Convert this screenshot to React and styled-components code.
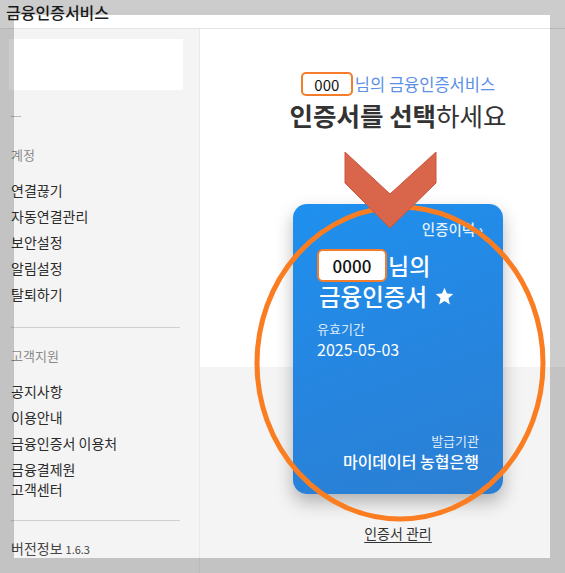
import React from "react";
import styled, { createGlobalStyle } from "styled-components";
import { MdStar } from "react-icons/md";

const GlobalStyle = createGlobalStyle`
  html, body {
    margin: 0;
    padding: 0;
    overflow: hidden;
    background: #ffffff;
  }
  body {
    font-family: "Noto Sans CJK KR", "Noto Sans", sans-serif;
    color: #333;
  }
  * {
    box-sizing: border-box;
  }
`;

const Page = styled.div`
  width: 600px;
  height: 573px;
  display: flex;
  flex-direction: column;
`;

const TitleBar = styled.div`
  height: 29px;
  flex: none;
  padding: 0 0 0 6px;
  border-bottom: 1px solid #e4e4e4;
  font-size: 16px;
  font-weight: 500;
  line-height: 24px;
  color: #1e1e1e;
`;

const Body = styled.div`
  flex: 1;
  display: flex;
  min-height: 0;
`;

const Sidebar = styled.aside`
  width: 200px;
  flex: none;
  background: #f4f4f4;
  border-right: 1px solid #e9e9e9;
  padding: 10px 0 0 9px;
`;

const ProfileBox = styled.div`
  width: 174px;
  height: 51px;
  background: #ffffff;
`;

const NameDash = styled.div`
  width: 10px;
  height: 1px;
  margin: 26px 0 0 2px;
  background: #b9b9b9;
`;

const SectionLabel = styled.div`
  margin: ${(p) => p.$top}px 0 0 2px;
  font-size: 13px;
  line-height: 20px;
  color: #8a8a8a;
`;

const Menu = styled.ul`
  list-style: none;
  margin: 15px 0 0 2px;
  padding: 0;
  display: flex;
  flex-direction: column;
  gap: 6px;
`;

const MenuItem = styled.li`
  font-size: 14px;
  line-height: 20px;
  color: #2b2b2b;
`;

const Divider = styled.hr`
  width: 169px;
  margin: ${(p) => p.$top}px 0 0 2px;
  border: 0;
  border-top: 1px solid #cfcfcf;
`;

const Version = styled.div`
  margin: 17px 0 0 2px;
  font-size: 14px;
  line-height: 20px;
  color: #444;

  small {
    font-size: 11px;
    margin-left: 3px;
  }
`;

const Main = styled.main`
  position: relative;
  width: 400px;
  flex: none;
  padding-right: 4px;
  display: flex;
  flex-direction: column;
  align-items: center;
  background: linear-gradient(to bottom, #ffffff 0, #ffffff 338px, #f4f4f4 338px);
`;

const Greeting = styled.div`
  margin-top: 43px;
  display: flex;
  align-items: center;
  gap: 2px;
  font-size: 16.5px;
  color: #5b8fe8;
`;

const NameInput = styled.span`
  display: inline-flex;
  align-items: center;
  justify-content: center;
  width: ${(p) => p.$w}px;
  height: ${(p) => p.$h}px;
  background: #ffffff;
  border: 2px solid #f47d2c;
  border-radius: ${(p) => p.$r}px;
  color: #111;
  font-size: ${(p) => p.$size}px;
`;

const Heading = styled.h1`
  margin: 3px 0 0;
  font-size: 25.5px;
  line-height: 32px;
  font-weight: 400;
  color: #333;

  b {
    font-weight: 700;
  }
`;

const Card = styled.section`
  margin-top: 73px;
  width: 210px;
  height: 290px;
  border-radius: 14px;
  padding: 15px 24px 22px 24px;
  background: linear-gradient(160deg, #1f90ee 0%, #2685df 55%, #2b7fd2 100%);
  box-shadow: 0 8px 18px rgba(0, 0, 0, 0.28);
  color: #ffffff;
  display: flex;
  flex-direction: column;
`;

const HistoryLink = styled.div`
  align-self: flex-end;
  margin-right: -4px;
  font-size: 14.5px;
  font-weight: 500;
  line-height: 20px;
  color: rgba(255, 255, 255, 0.88);
`;

const CardName = styled.div`
  margin-top: 10px;
  display: flex;
  align-items: center;
  gap: 1px;
  font-size: 23px;
  font-weight: 500;
  line-height: 33px;
`;

const CardTitle = styled.div`
  display: flex;
  align-items: center;
  gap: 7px;
  font-size: 23.5px;
  font-weight: 500;
  line-height: 28px;
  margin-left: 2px;
`;

const Label = styled.div`
  font-size: 13px;
  line-height: 18px;
  color: rgba(255, 255, 255, 0.85);
  margin-top: ${(p) => p.$top || 0}px;
  text-align: ${(p) => (p.$right ? "right" : "left")};
`;

const Value = styled.div`
  font-size: ${(p) => p.$size}px;
  font-weight: ${(p) => p.$weight || 400};
  line-height: 22px;
  text-align: ${(p) => (p.$right ? "right" : "left")};
`;

const Issuer = styled.div`
  margin-top: auto;
`;

const ManageLink = styled.a`
  margin-top: 29px;
  font-size: 14px;
  line-height: 20px;
  color: #333;
  text-decoration: underline;
  text-underline-offset: 3px;
`;

const Annotation = styled.svg`
  position: absolute;
  left: 0;
  top: 0;
  width: 400px;
  height: 544px;
  pointer-events: none;
`;

const Shade = styled.div`
  position: fixed;
  left: 0;
  top: 0;
  width: 565px;
  height: 573px;
  border-style: solid;
  border-color: rgba(0, 0, 0, 0.2);
  border-width: 15px 15px 15px 14px;
  pointer-events: none;
`;

const accountMenu = ["연결끊기", "자동연결관리", "보안설정", "알림설정", "탈퇴하기"];

export default function App() {
  return (
    <>
      <GlobalStyle />
      <Page>
        <TitleBar>금융인증서비스</TitleBar>
        <Body>
          <Sidebar>
            <ProfileBox />
            <NameDash />
            <SectionLabel $top={28}>계정</SectionLabel>
            <Menu>
              {accountMenu.map((m) => (
                <MenuItem key={m}>{m}</MenuItem>
              ))}
            </Menu>
            <Divider $top={23} />
            <SectionLabel $top={18}>고객지원</SectionLabel>
            <Menu>
              <MenuItem>공지사항</MenuItem>
              <MenuItem>이용안내</MenuItem>
              <MenuItem>금융인증서 이용처</MenuItem>
              <MenuItem>
                금융결제원
                <br />
                고객센터
              </MenuItem>
            </Menu>
            <Divider $top={21} />
            <Version>
              버전정보<small>1.6.3</small>
            </Version>
          </Sidebar>
          <Main>
            <Greeting>
              <NameInput $w={52} $h={24} $r={5} $size={15}>
                000
              </NameInput>
              님의 금융인증서비스
            </Greeting>
            <Heading>
              <b>인증서를 선택</b>하세요
            </Heading>
            <Card>
              <HistoryLink>인증이력 ›</HistoryLink>
              <CardName>
                <NameInput $w={70} $h={33} $r={6} $size={17}>
                  0000
                </NameInput>
                님의
              </CardName>
              <CardTitle>
                금융인증서 <MdStar size={21} />
              </CardTitle>
              <Label $top={10}>유효기간</Label>
              <Value $size={16}>2025-05-03</Value>
              <Issuer>
                <Label $right>발급기관</Label>
                <Value $size={16} $weight={500} $right>
                  마이데이터 농협은행
                </Value>
              </Issuer>
            </Card>
            <ManageLink>인증서 관리</ManageLink>
            <Annotation viewBox="0 0 400 544">
              <ellipse cx="200" cy="334" rx="143" ry="156" fill="none" stroke="#fb7d22" strokeWidth="5" />
              <polygon
                points="145,123 190,165 236,123 236,154 190,199 145,154"
                fill="#d9654a"
                stroke="#c9583f"
                strokeWidth="1"
              />
            </Annotation>
          </Main>
        </Body>
      </Page>
      <Shade />
    </>
  );
}
